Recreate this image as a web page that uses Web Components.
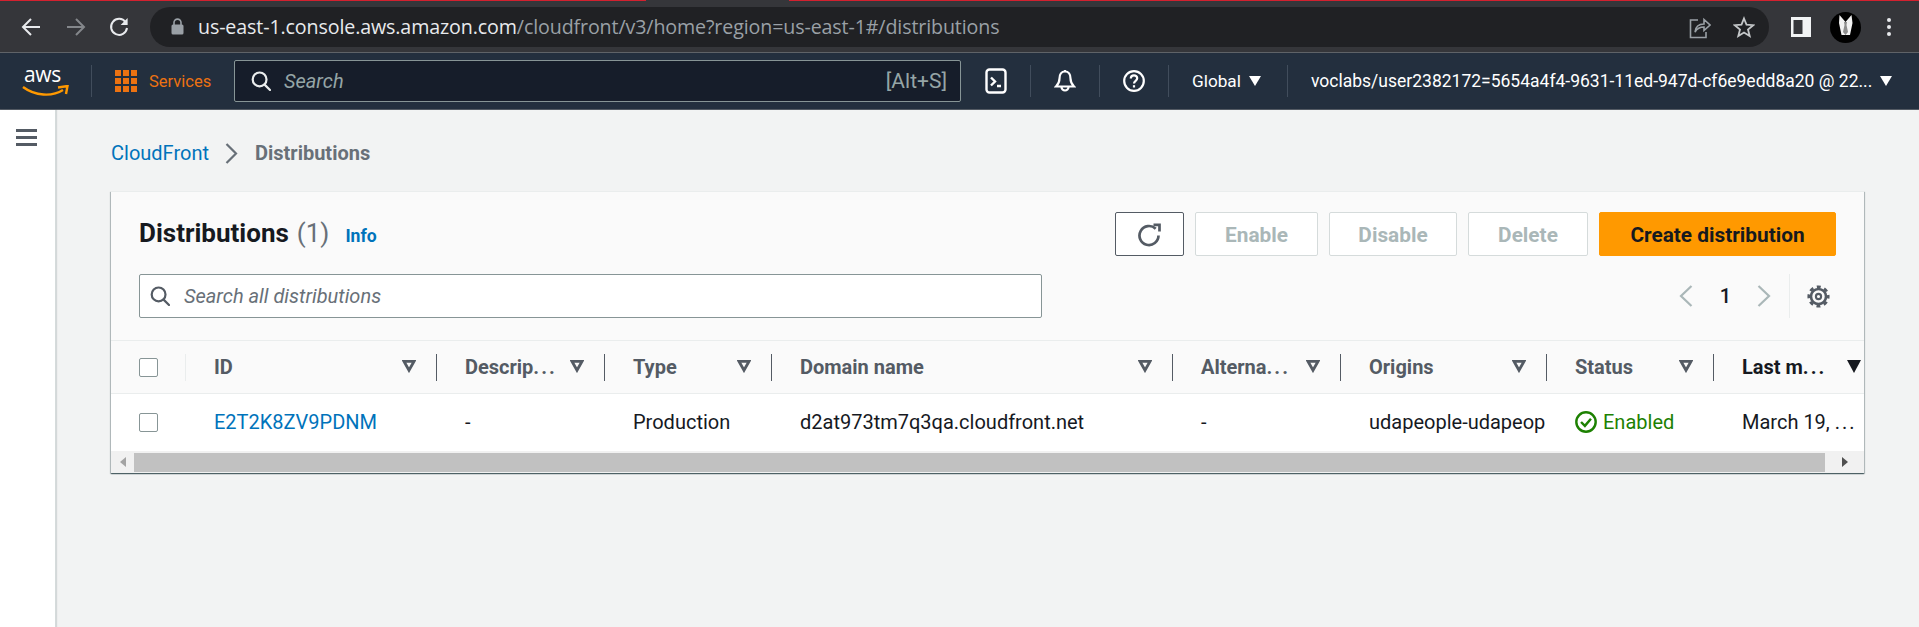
<!DOCTYPE html>
<html>
<head>
<meta charset="utf-8">
<style>
html, body { margin: 0; height: 627px; overflow: hidden; background: #f2f3f3; }
body { font-family: "Roboto", "Liberation Sans", sans-serif; }
</style>
</head>
<body>
<browser-bar></browser-bar>
<aws-nav></aws-nav>
<console-page>
  <bread-crumb></bread-crumb>
  <dist-card></dist-card>
</console-page>

<script>
// small helper so every element gets its shadow root the same way
function fill(el, html) {
  const shadow = el.attachShadow({mode: 'open'});
  shadow.innerHTML = html;
}

const SEARCH_ICON = (color, size) => `<svg width="${size}" height="${size}" viewBox="0 0 20 20" fill="none" stroke="${color}" stroke-width="2.2"><circle cx="8.6" cy="8.4" r="6.9"/><path d="M13.6 13.6 19 19" stroke-linecap="round"/></svg>`;
// the ellipsis in the reference is set wider than the font's own dots
const DOTS = '<span style="letter-spacing:2px">...</span>';

class BrowserBar extends HTMLElement {
  connectedCallback() {
    fill(this, `
<style>
:host { display: block; height: 52px; background: #35363a; border-bottom: 1px solid #5f6368; position: relative; }
.red { position: absolute; left: 0; right: 0; top: 0; height: 1px; background: linear-gradient(90deg, #d3212f 646px, #35363a 646px, #35363a 789px, #d3212f 789px); }
.row { display: flex; align-items: center; height: 52px; box-sizing: border-box; padding-top: 2px; }
.btn { width: 45px; display: flex; justify-content: center; }
.first { margin-left: 8px; }
.pill { margin-left: 7px; width: 1619px; height: 40px; border-radius: 20px; background: #202124; display: flex; align-items: center; box-sizing: border-box; padding-left: 21px; margin-top: -1px; }
.url { margin-left: 14px; font: 19.65px "Open Sans", sans-serif; color: #9aa0a6; letter-spacing: -0.12px; white-space: nowrap; }
.url b { font-weight: 400; color: #e8eaed; }
.end { margin-left: auto; display: flex; align-items: center; }
.share { margin-right: 22px; }
.star { margin-right: 14px; }
.panel { margin-left: 22px; }
.avatar { margin-left: 19px; }
.dots { margin-left: 26px; }
</style>
<div class="red"></div>
<div class="row">
  <div class="btn first"><svg width="20" height="20" viewBox="0 0 20 20" fill="none" stroke="#e8eaed" stroke-width="2"><path d="M19 10H2M10 2 2 10l8 8"/></svg></div>
  <div class="btn"><svg width="20" height="20" viewBox="0 0 20 20" fill="none" stroke="#84878b" stroke-width="2"><path d="M1 10h17M10 2l8 8-8 8"/></svg></div>
  <div class="btn" style="margin-left:-2px"><svg width="20" height="20" viewBox="0 0 20 20" fill="none" stroke="#e8eaed" stroke-width="2"><path d="M16.6 5.2A8 8 0 1 0 18 11"/><path d="M18.6 1v7h-7z" fill="#e8eaed" stroke="none"/></svg></div>
  <div class="pill" style="margin-left:9px">
    <svg width="13" height="17" viewBox="0 0 13 17"><path d="M3 7V4.6a3.5 3.5 0 0 1 7 0V7" fill="none" stroke="#9aa0a6" stroke-width="1.6"/><rect x="0.5" y="6.5" width="12" height="10" rx="1.5" fill="#9aa0a6"/></svg>
    <span class="url"><b>us-east-1.console.aws.amazon.com</b>/cloudfront/v3/home?region=us-east-1#/distributions</span>
    <div class="end">
      <svg class="share" width="22" height="24" viewBox="0 0 22 24" fill="none" stroke="#9aa0a6" stroke-width="1.6"><path d="M9 5H1.5v17.5H17V17"/><path d="M6 17c.5-5 4-8 9-8V4.5L21 10l-6 5.5V12c-4 0-7 1.500-9 5z"/></svg>
      <svg class="star" width="22" height="22" viewBox="0 0 22 22" fill="none" stroke="#c4c7c9" stroke-width="1.8"><path d="M11 2.500 13.500 8.700 20.200 9.200 15 13.500 16.700 20 11 16.500 5.300 20 7 13.500 1.800 9.200 8.500 8.700z"/></svg>
    </div>
  </div>
  <svg class="panel" width="20" height="20" viewBox="0 0 20 20"><rect width="20" height="20" fill="#f1f3f4"/><rect x="2.500" y="3" width="9" height="14" fill="#35363a"/></svg>
  <svg class="avatar" width="31" height="31" viewBox="0 0 31 31"><circle cx="15.500" cy="15.500" r="15.500" fill="#000"/><path d="M9.500 3 15.500 10 21.500 3 22.500 11 20 23H11.500L9 11z" fill="#f2f2f2"/><path d="M14 10h3l-.5 3 1.500 7-2.500 3-2.500-3 1.500-7z" fill="#8d8d8d"/></svg>
  <svg class="dots" width="4" height="18" viewBox="0 0 4 18"><g fill="#e8eaed"><circle cx="2" cy="2" r="2"/><circle cx="2" cy="9" r="2"/><circle cx="2" cy="16" r="2"/></g></svg>
</div>`);
  }
}
customElements.define('browser-bar', BrowserBar);

class AwsNav extends HTMLElement {
  connectedCallback() {
    fill(this, `
<style>
:host { display: block; height: 56px; background: #232f3e; border-bottom: 1px solid #545b64; color: #fff; font-size: 15px; }
.row { display: flex; align-items: center; height: 56px; }
.logo { width: 67px; margin-left: 24px; position: relative; height: 36px; }
.aws { position: absolute; left: 0; top: 0; font: 21px/22px "Open Sans", sans-serif; color: #fff; letter-spacing: -0.4px; }
.smile { position: absolute; left: -2px; top: 22px; }
.sep { width: 1px; height: 32px; background: #414d5c; flex: none; }
.grid { margin-left: 23px; width: 22px; height: 22px; display: grid; grid-template-columns: repeat(3, 6px); grid-auto-rows: 6px; gap: 2px; }
.grid i { background: #ec7211; }
.services { margin-left: 12px; color: #ec7211; font-size: 16.5px; width: 62px; white-space: nowrap; }
.search { margin-left: 23px; width: 727px; height: 42px; box-sizing: border-box; border: 1px solid #879596; border-radius: 2px; background: #161d2a; display: flex; align-items: center; padding: 0 13px 0 16px; font-size: 20px; color: #95a5a6; }
.search em { margin-left: 13px; flex: 1; }
.search span { font-size: 21px; }
.cell { display: flex; justify-content: center; align-items: center; width: 68px; }
.region { display: flex; align-items: center; margin-left: 23px; width: 95px; font-size: 17.2px; }
.region svg, .user svg { margin-left: 8px; }
.user { display: flex; align-items: center; margin-left: 23px; white-space: nowrap; font-size: 17.5px; }
</style>
<div class="row">
  <div class="logo"><span class="aws">aws</span>
    <svg class="smile" width="47" height="14" viewBox="0 0 47 14" fill="none"><path d="M1 2c12 9 29 10 40 3" stroke="#ff9900" stroke-width="2.400"/><path d="M36 2.500 45.500 1 44 9" stroke="#ff9900" stroke-width="2.400"/></svg>
  </div>
  <div class="sep"></div>
  <div class="grid"><i></i><i></i><i></i><i></i><i></i><i></i><i></i><i></i><i></i></div>
  <div class="services">Services</div>
  <div class="search">${SEARCH_ICON('#eaeded', 20)}<em>Search</em><span>[Alt+S]</span></div>
  <div class="cell" style="margin-left:1px"><svg width="22" height="26" viewBox="0 0 22 26" fill="none" stroke="#fff" stroke-width="2.400"><rect x="1.500" y="1.500" width="19" height="23" rx="3"/><path d="M6 9.500 10 13.500 6 17.500M12 18h4"/></svg></div>
  <div class="sep"></div>
  <div class="cell"><svg width="22" height="24" viewBox="0 0 22 24" fill="none" stroke="#fff" stroke-width="2.200"><path d="M11 2.500c-3.500 0-5.500 3-5.500 7 0 3.500-1.500 6-3.500 8h18c-2-2-3.500-4.500-3.500-8 0-4-2-7-5.500-7z"/><path d="M11 1v2M7.500 18a3.500 3.500 0 0 0 7 0"/></svg></div>
  <div class="sep"></div>
  <div class="cell"><svg width="22" height="24" viewBox="0 0 22 24" fill="none" stroke="#fff" stroke-width="2.200"><circle cx="11" cy="12" r="9.800"/><path d="M7.800 9.500c0-2 1.500-3.200 3.200-3.200s3.200 1.200 3.200 3c0 2.500-3.200 2.500-3.200 5.200"/><path d="M11 16.200v2.300"/></svg></div>
  <div class="sep"></div>
  <div class="region">Global<svg width="12" height="10" viewBox="0 0 12 10"><path d="M0 0h12L6 10z" fill="#fff"/></svg></div>
  <div class="sep"></div>
  <div class="user">voclabs/user2382172=5654a4f4-9631-11ed-947d-cf6e9edd8a20 @ 22...<svg width="12" height="10" viewBox="0 0 12 10"><path d="M0 0h12L6 10z" fill="#fff"/></svg></div>
</div>`);
  }
}
customElements.define('aws-nav', AwsNav);

class ConsolePage extends HTMLElement {
  connectedCallback() {
    fill(this, `
<style>
:host { display: flex; height: 517px; }
.rail { background: #fff; border-right: 1px solid #d5dbdb; box-shadow: 1px 0 1px rgba(0,28,36,.12); padding: 19px 0 0 16px; width: 39px; flex: none; }
.rail i { display: block; width: 21px; height: 3px; background: #545b64; margin-bottom: 4px; }
.main { flex: 1; padding: 0 55px 0 55px; min-width: 0; }
</style>
<div class="rail"><i></i><i></i><i></i></div>
<div class="main"><slot></slot></div>`);
  }
}
customElements.define('console-page', ConsolePage);

class BreadCrumb extends HTMLElement {
  connectedCallback() {
    fill(this, `
<style>
:host { display: flex; align-items: center; height: 81px; padding-top: 5px; box-sizing: border-box; font-size: 20px; }
a { color: #0073bb; }
svg { margin: 0 17px 0 16px; }
b { color: #687078; font-weight: 700; }
</style>
<a>CloudFront</a>
<svg width="13" height="21" viewBox="0 0 13 21" fill="none" stroke="#687078" stroke-width="2.200"><path d="M1.500 1 11 10.500 1.500 20"/></svg>
<b>Distributions</b>`);
  }
}
customElements.define('bread-crumb', BreadCrumb);

class AwsButton extends HTMLElement {
  connectedCallback() {
    const primary = this.hasAttribute('primary');
    const icon = this.hasAttribute('icon');
    fill(this, `
<style>
:host { display: flex; align-items: center; justify-content: center; box-sizing: border-box; height: 44px; padding-top: 1px; border-radius: 2px; font-size: 20.8px; font-weight: 700;
  border: 1px solid ${primary ? '#ff9900' : icon ? '#545b64' : '#d5dbdb'};
  background: ${primary ? '#ff9900' : '#fff'};
  color: ${primary ? '#16191f' : '#aab7b8'};
  ${icon ? 'background:#fff;' : ''} }
</style>
<slot></slot>`);
  }
}
customElements.define('aws-button', AwsButton);

class SortIcon extends HTMLElement {
  connectedCallback() {
    const on = this.hasAttribute('on');
    fill(this, `
<style>:host { display: block; width: 14px; height: 14px; line-height: 0; flex: none; }</style>
<svg width="14" height="13" viewBox="0 0 14 13">
${on ? '<path d="M0 0h14L7 13z" fill="#16191f"/>' : '<path d="M2 1.400h10L7 10.300z" fill="none" stroke="#545b64" stroke-width="2.800"/>'}
</svg>`);
  }
}
customElements.define('sort-icon', SortIcon);

class CheckBox extends HTMLElement {
  connectedCallback() {
    fill(this, `<style>:host { display: block; box-sizing: border-box; width: 19px; height: 19px; border: 1.500px solid #879596; border-radius: 2px; background: #fff; }</style>`);
  }
}
customElements.define('check-box', CheckBox);

// column widths measured from the separators in the header
const COLS = '75px 251px 168px 167px 401px 168px 206px 167px 150px';

class DistCard extends HTMLElement {
  connectedCallback() {
    const heads = [
      ['ID'], ['Descrip' + DOTS], ['Type'], ['Domain name'], ['Alterna' + DOTS], ['Origins'], ['Status'], ['Last m' + DOTS, true]
    ];
    const headHtml = heads.map(([t, on], i) => `
      <div class="th${on ? ' on' : ''}${i === heads.length - 1 ? ' last' : ''}">
        <span class="t">${t}</span><sort-icon ${on ? 'on' : ''}></sort-icon>
      </div>`).join('');
    fill(this, `
<style>
:host { display: block; width: 1753px; height: 282px; background: #fafafa; box-shadow: 0 1px 1px 0 rgba(0,28,36,.5), 1px 1px 1px 0 rgba(0,28,36,.2), -1px 1px 1px 0 rgba(0,28,36,.2); border-top: 1px solid #eaeded; box-sizing: border-box; overflow: hidden; }
.top { height: 149px; box-sizing: border-box; padding: 20px 28px 0; display: grid; grid-template-columns: 903px 1fr; grid-template-rows: 44px 44px; row-gap: 18px; border-bottom: 1px solid #eaeded; }
.title { display: flex; align-items: baseline; padding-top: 6px; }
h1 { margin: 0; font-size: 26px; font-weight: 700; color: #16191f; }
.count { margin-left: 8px; font-size: 26px; color: #687078; }
.info { margin-left: 16px; font-size: 17.6px; font-weight: 700; color: #0073bb; }
.actions { display: flex; justify-content: flex-end; gap: 11px; }
.input { grid-column: 1; box-sizing: border-box; width: 903px; height: 44px; background: #fff; border: 1px solid #879596; border-radius: 2px; display: flex; align-items: center; padding-left: 10px; color: #687078; font-size: 20px; }
.input em { margin-left: 14px; }
.pager { display: flex; align-items: center; justify-content: flex-end; color: #16191f; font-size: 20px; font-weight: 500; padding-right: 6px; }
.one { margin: 0 26px 0 27px; }
.pdiv { width: 1px; height: 44px; background: #eaeded; margin: 0 17px 0 18px; }
.head, .row { display: grid; grid-template-columns: ${COLS}; width: max-content; align-items: center; }
.head { height: 53px; border-bottom: 1px solid #eaeded; box-sizing: border-box; }
.row { height: 57px; background: #fff; box-sizing: border-box; font-size: 20px; color: #16191f; padding-bottom: 1px; }
.box { padding-left: 28px; }
.th { position: relative; display: flex; align-items: center; padding: 0 20px 0 28px; font-size: 20px; font-weight: 700; color: #545b64; height: 27px; border-right: 1px solid #545b64; white-space: nowrap; justify-content: space-between; }
.th.last { border-right: 0; padding-right: 0; color: #16191f; }
.th.last sort-icon { margin-right: 3px; }
.box.hd { border-right: 1px solid #eaeded; height: 27px; display: flex; align-items: center; }
.td { padding-left: 28px; white-space: nowrap; overflow: hidden; }
.td a { color: #0073bb; }
.ok { color: #1d8102; display: flex; align-items: center; gap: 6px; }
.bar { height: 22px; background: #f1f1f1; display: flex; align-items: center; }
.bar span { width: 23px; display: flex; justify-content: center; }
.thumb { flex: 1; height: 19px; background: #c1c1c1; }
.bar span:last-child { width: 39px; }
</style>
<div class="top">
  <div class="title"><h1>Distributions</h1><span class="count">(1)</span><span class="info">Info</span></div>
  <div class="actions">
    <aws-button icon style="width:69px"><svg width="24" height="25" viewBox="0 0 24 25" fill="none" stroke="#545b64" stroke-width="2.700"><path d="M17.700 6.800A9.500 9.500 0 1 0 20.500 13.500"/><path d="M15.500 2.800H21.500V9.500"/></svg></aws-button>
    <aws-button style="width:123px">Enable</aws-button>
    <aws-button style="width:128px">Disable</aws-button>
    <aws-button style="width:120px">Delete</aws-button>
    <aws-button primary style="width:237px">Create distribution</aws-button>
  </div>
  <div class="input">${SEARCH_ICON('#545b64', 20)}<em>Search all distributions</em></div>
  <div class="pager">
    <svg width="14" height="22" viewBox="0 0 14 22" fill="none" stroke="#aab7b8" stroke-width="2.200"><path d="M12.500 1 2 11l10.500 10"/></svg>
    <span class="one">1</span>
    <svg width="14" height="22" viewBox="0 0 14 22" fill="none" stroke="#aab7b8" stroke-width="2.200"><path d="M1.500 1 12 11 1.500 21"/></svg>
    <div class="pdiv"></div>
    <svg width="23" height="23" viewBox="0 0 22 22" fill="none" stroke="#545b64"><circle cx="11" cy="11" r="7.200" stroke-width="2.500"/><circle cx="11" cy="11" r="9.300" stroke-width="2.600" stroke-dasharray="3.800 3.500" stroke-dashoffset="1.900"/><circle cx="11" cy="11" r="2.500" stroke-width="2"/></svg>
  </div>
</div>
<div class="head">
  <div class="box hd"><check-box></check-box></div>${headHtml}
</div>
<div class="row">
  <div class="box"><check-box></check-box></div>
  <div class="td"><a>E2T2K8ZV9PDNM</a></div>
  <div class="td">-</div>
  <div class="td">Production</div>
  <div class="td">d2at973tm7q3qa.cloudfront.net</div>
  <div class="td">-</div>
  <div class="td" style="padding-right:0">udapeople-udapeop</div>
  <div class="td ok"><svg width="22" height="22" viewBox="0 0 20 20" fill="none" stroke="#1d8102" stroke-width="2.200"><circle cx="10" cy="10" r="8.800"/><path d="M5.500 10 9 13.500 14.500 7"/></svg>Enabled</div>
  <div class="td">March 19, ${DOTS}</div>
</div>
<div class="bar">
  <span><svg width="6" height="10" viewBox="0 0 6 10"><path d="M6 0v10L0 5z" fill="#a3a3a3"/></svg></span>
  <div class="thumb"></div>
  <span><svg width="6" height="10" viewBox="0 0 6 10"><path d="M0 0v10l6-5z" fill="#505050"/></svg></span>
</div>`);
  }
}
customElements.define('dist-card', DistCard);
</script>
</body>
</html>
